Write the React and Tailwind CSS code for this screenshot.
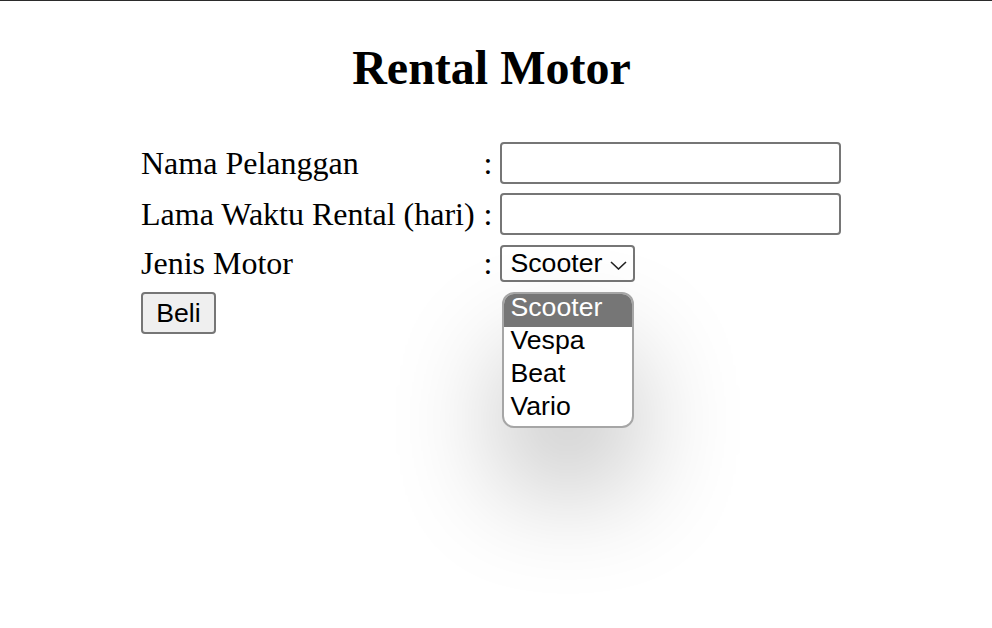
import { useState } from "react"

const motors = ["Scooter", "Vespa", "Beat", "Vario"]

export default function App() {
  const [nama, setNama] = useState("")
  const [lama, setLama] = useState("")
  const [jenis] = useState("Scooter")

  const serif = { fontFamily: '"Liberation Serif", "Times New Roman", serif' }
  const sans = { fontFamily: '"Liberation Sans", Arial, sans-serif' }

  return (
    <div className="min-h-screen w-full bg-white border-t border-[#2b2b2b] text-black" style={serif}>
      <h2 className="mt-[40px] text-center text-[48px] leading-[53px] font-bold pr-[9px]">Rental Motor</h2>

      <form className="mt-[48px] pl-[141px]" onSubmit={e => e.preventDefault()}>
        <div className="grid grid-cols-[auto_auto_auto] justify-start items-center gap-x-[8px] gap-y-[9px] text-[32px] leading-[37px]">
          <label>Nama Pelanggan</label>
          <span className="ml-px">:</span>
          <input
            type="text"
            value={nama}
            onChange={e => setNama(e.target.value)}
            className="w-[341px] h-[42px] border-2 border-[#767676] rounded-[4px] bg-white px-2 text-[26.67px]"
            style={sans}
          />

          <label>Lama Waktu Rental (hari)</label>
          <span className="ml-px">:</span>
          <input
            type="text"
            value={lama}
            onChange={e => setLama(e.target.value)}
            className="w-[341px] h-[42px] border-2 border-[#767676] rounded-[4px] bg-white px-2 text-[26.67px]"
            style={sans}
          />

          <label className="mt-px">Jenis Motor</label>
          <span className="mt-px ml-px">:</span>
          <div className="relative mt-px">
            <div
              className="flex items-center w-[135px] h-[37px] border-2 border-[#767676] rounded-[4px] bg-white pl-[8px] pr-[6px] text-[26.67px] leading-[31px]"
              style={sans}
            >
              <span className="flex-1">{jenis}</span>
              <svg width="17" height="9" viewBox="0 0 17 9" className="mt-[3px]">
                <polyline points="1,1 8.5,8 16,1" fill="none" stroke="#222" strokeWidth="1.6" />
              </svg>
            </div>

            <div
              className="absolute left-[2px] top-[47px] z-10 w-[132px] overflow-hidden rounded-[12px] border-2 border-[#a6a6a6] bg-white shadow-[0_60px_110px_rgba(0,0,0,0.24)] text-[26.67px]"
              style={sans}
            >
              {motors.map(m => (
                <div
                  key={m}
                  className={m === jenis ? "h-[33px] leading-[26px] bg-[#767676] text-white pl-[6px]" : "h-[33px] leading-[26px] pl-[6px]"}
                >
                  {m}
                </div>
              ))}
            </div>
          </div>

          <div className="col-span-3 mt-px">
            <button
              type="submit"
              className="w-[75px] h-[42px] border-2 border-[#767676] rounded-[4px] bg-[#efefef] text-[26.67px] leading-[31px] text-center"
              style={sans}
            >
              Beli
            </button>
          </div>
        </div>
      </form>
    </div>
  )
}
